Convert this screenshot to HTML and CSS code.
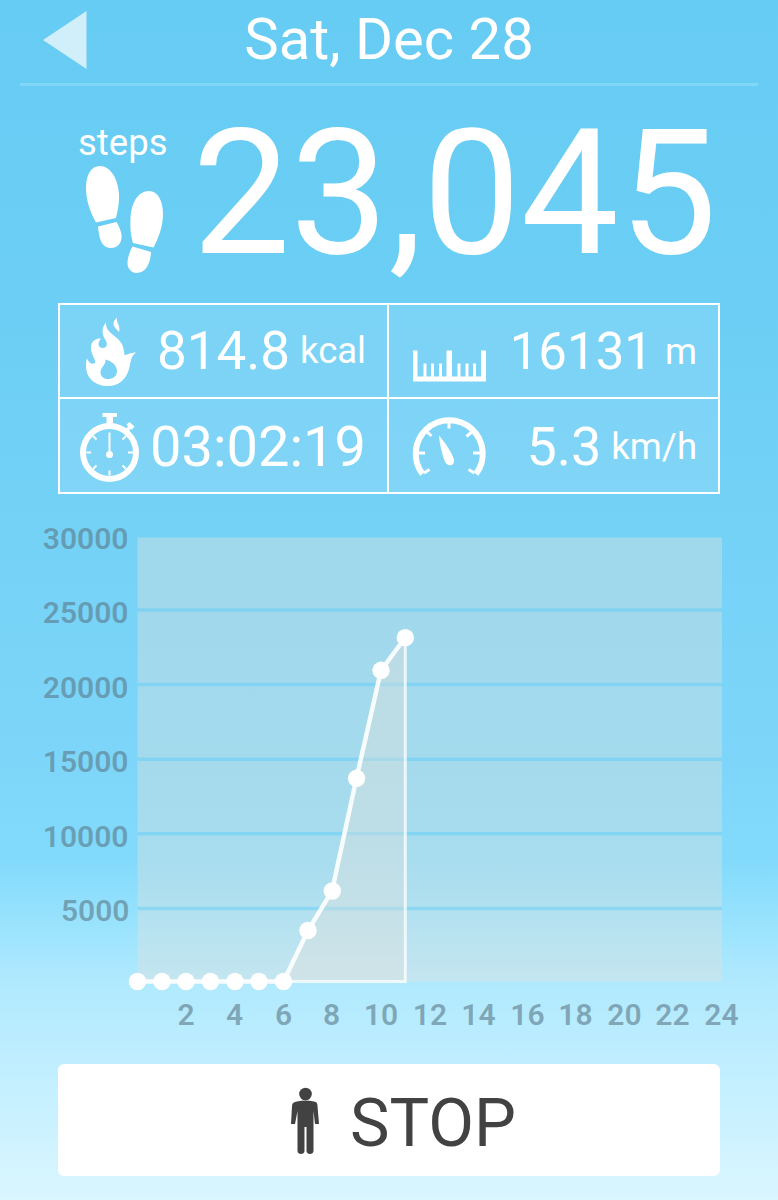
FILE: index.html
```html
<!DOCTYPE html>
<html lang="en">
<head>
    <meta charset="UTF-8">
    <meta name="viewport" content="width=device-width, initial-scale=1.0">
    <title>Pedometer</title>
    <link rel="stylesheet" href="styles.css">
</head>
<body>
    <header class="header">
        <svg class="back" viewBox="0 0 44 58"><path d="M0 29L43.500 0V58Z"/></svg>
        <h1>Sat, Dec 28</h1>
    </header>

    <section class="steps">
        <div class="steps-label">
            <span>steps</span>
            <svg width="80" height="110" viewBox="0 0 80 110">
                <path d="M15 1C25 1 33 13 34 29C34.500 40 32 48 31 53L11 57.500C6 49 1 36 1 23C1 10 6 1 15 1Z"/>
                <path d="M13 61.500L31.500 57C35 63 37 68 36.500 73C36 79 32 83 26 83C16 83 14 72 13 61.500Z"/>
                <path d="M64 26C73 26 78 36 78 49C78 62 73 74 68.500 82.500L48 78C46 71 45 65 45.500 54C46 38 53 26 64 26Z"/>
                <path d="M47.500 81.500L66 87C65.500 98 61 108 51.500 108C46 108 42 103 42.500 97C43 91 45 86 47.500 81.500Z"/>
            </svg>
        </div>
        <div class="steps-count">23,045</div>
    </section>

    <section class="stats">
        <div class="stat">
            <svg width="60" height="80" viewBox="80 311 60 80">
                <path fill-rule="evenodd" d="M106 322.500C105 333 117 335 122 344C124 348 124 352 124.500 355C127 355 131 352 136 352.500C131 356 131 361 129.500 367C127 379 119 386 108 386C95 386 86 378 86 366C86 363 86 361 87 358.500C89 363 92 365 95 363C96 359 91 355 91 348C91 341 95 338.500 101 338.500C97 343 98 348 103 348C107 348 108 344 105.500 340C101 333 102 327 106 322.500ZM105.500 359.500C106 365 100.500 367 100.500 372.500C101 382 117 381 117 371C117 365 111 361 105.500 359.500Z"/>
                <path d="M117 317.500C116 323 121 326 119 332C117 329 113 327 113.500 323C114 320 116 319 117 317.500Z"/>
            </svg>
            <p><span class="value kcal">814.8</span><span class="unit">kcal</span></p>
        </div>
        <div class="stat">
            <svg width="76" height="80" viewBox="411 310.500 76 80">
                <path d="M413 350H417.500V376H423.500V363H426.500V376H431V363H434V376H439V363H442V376H446.500V350H452V376H457.500V363H460.500V376H465.500V363H468.500V376H473V363H476V376H481V350H486V381H413Z"/>
            </svg>
            <p class="meters"><span class="value">16131</span><span class="unit">m</span></p>
        </div>
        <div class="stat">
            <svg width="62" height="80" viewBox="80 405.500 62 80">
                <circle class="ring" cx="109.500" cy="452" r="26.500"/>
                <path d="M102.500 412.500H117V416.500H113V424H106.500V416.500H102.500ZM125 429.500L128 426L126.500 424L129.500 421.500L134.500 426L132 429L130.500 428.500L128 432Z"/>
                <path class="tick" d="M109.500 432V452"/>
                <circle cx="109.500" cy="454" r="3.500"/>
                <path class="tick" d="M109.500 470V475M86.500 452H91M128 452H133M93 435.500L96.500 439M126 435.500L122.500 439M93 468.500L96.500 465M126 468.500L122.500 465"/>
            </svg>
            <p class="duration"><span class="value time">03:02:19</span></p>
        </div>
        <div class="stat">
            <svg width="76" height="80" viewBox="411 405.500 76 80">
                <path class="dial" d="M422.500 473.500A33.500 33.500 0 1 1 476 473.500"/>
                <path class="dial-tick" d="M424 472.500L429.500 469M474.500 472.500L468.500 469M418 452.500H425M473 452.500H481M426 430.500L431.500 435.500M473 430.500L466.500 436M449 420V428"/>
                <path d="M439 435C445 442 452 452 454 459C455 467 446 466 444.500 460C442 453 439.500 443 439 435Z"/>
            </svg>
            <p class="pace"><span class="value">5.3</span><span class="unit">km/h</span></p>
        </div>
    </section>

    <svg class="chart" width="778" height="530" viewBox="0 520 778 530">
        <rect class="plot" x="137.500" y="537.500" width="584.500" height="444"/>
        <path class="grid" d="M137.500 610H722M137.500 684.500H722M137.500 759.200H722M137.500 833.800H722M137.500 908.500H722"/>
        <path class="area" d="M283.500 981L308 930.500L332 891L356.500 778L381 670.500L405.300 637.500V981.500Z"/>
        <path class="edge" d="M405.300 637.500V981.500H283.500"/>
        <polyline class="line" points="137.500,981.500 283.500,981.500 308,930.500 332,891 356.500,778 381,670.500 405.300,637.500"/>
        <g class="points">
            <circle cx="137.500" cy="981.500" r="8.700"/>
            <circle cx="162" cy="981.500" r="8.700"/>
            <circle cx="186" cy="981.500" r="8.700"/>
            <circle cx="210.500" cy="981.500" r="8.700"/>
            <circle cx="235" cy="981.500" r="8.700"/>
            <circle cx="259" cy="981.500" r="8.700"/>
            <circle cx="283.500" cy="981.500" r="8.700"/>
            <circle cx="308" cy="930.500" r="8.700"/>
            <circle cx="332.300" cy="891" r="8.700"/>
            <circle cx="356.600" cy="778.300" r="8.700"/>
            <circle cx="381" cy="670.300" r="8.700"/>
            <circle cx="405.300" cy="637.700" r="8.700"/>
        </g>
        <g class="y-labels">
            <text x="128.500" y="548.500">30000</text>
            <text x="128.500" y="622.500">25000</text>
            <text x="128.500" y="697.500">20000</text>
            <text x="128.500" y="771.500">15000</text>
            <text x="128.500" y="846.500">10000</text>
            <text x="129.500" y="920.500">5000</text>
        </g>
        <g class="x-labels">
            <text x="186" y="1025">2</text>
            <text x="234.500" y="1025">4</text>
            <text x="283.500" y="1025">6</text>
            <text x="331.500" y="1025">8</text>
            <text x="381" y="1025">10</text>
            <text x="430" y="1025">12</text>
            <text x="478.500" y="1025">14</text>
            <text x="527.500" y="1025">16</text>
            <text x="575.500" y="1025">18</text>
            <text x="624.500" y="1025">20</text>
            <text x="672.500" y="1025">22</text>
            <text x="721.500" y="1025">24</text>
        </g>
    </svg>

    <button class="btn-stop">
        <svg width="30" height="70" viewBox="0 0 30 70">
            <circle cx="15.500" cy="8" r="6.300"/>
            <path d="M7 15.500Q15 13.500 24 15.500C26.500 16 27.500 17 27.500 20L29 38H25L23.500 25V65C23.500 69 16.500 69 16.500 65V41H14.500V65C14.500 69 7.500 69 7.500 65V25L5 38H1L2 20C2 17 4 16 7 15.500Z"/>
        </svg>
        <span>STOP</span>
    </button>
</body>
</html>
```
FILE: styles.css
```css
* {
    box-sizing: border-box;
}
body {
    margin: 0;
    width: 778px;
    height: 1200px;
    overflow: hidden;
    font-family: Roboto, sans-serif;
    color: #ffffff;
    background: linear-gradient(#67ccf3 0, #69cdf4 200px, #73d1f6 500px, #7dd6f9 760px, #82dafb 860px, #94e1fd 910px, #b0e9fe 980px, #bfeeff 1060px, #daf6ff 1200px);
}
svg {
    display: block;
    fill: #ffffff;
}
.header {
    display: grid;
    grid-template-columns: 66px 1fr 66px;
    align-items: center;
    height: 86px;
    margin: 0 20px;
    padding-bottom: 4px;
    border-bottom: 3px solid #82d7f8;
}
.back {
    width: 44px;
    height: 58px;
    margin-left: 23px;
    fill: #d1effb;
}
h1 {
    margin: 0;
    font-size: 58px;
    font-weight: 400;
    line-height: 77px;
    text-align: center;
}
.steps {
    display: flex;
    justify-content: space-between;
    height: 217px;
    padding: 0 61px 0 78px;
}
.steps-label {
    padding-top: 35px;
    font-size: 36.5px;
    line-height: 43px;
}
.steps-label svg {
    margin: 1px 0 0 7px;
}
.steps-count {
    font-size: 174.5px;
    line-height: 216px;
}
.stats {
    display: grid;
    grid-template-columns: 327px 329px;
    grid-template-rows: 92px 93px;
    gap: 2px;
    width: 662px;
    height: 191px;
    margin: 0 auto;
    border: 2px solid #ffffff;
    background: linear-gradient(#ffffff, #ffffff) 327px 0 / 2px 100% no-repeat,
        linear-gradient(#ffffff, #ffffff) 0 92px / 100% 2px no-repeat,
        rgba(255, 255, 255, 0.1);
}
.stat {
    display: flex;
    justify-content: space-between;
    align-items: center;
    padding: 0 21px 0 20px;
}
.stat:nth-child(even) {
    padding-left: 22px;
}
.stat p {
    margin: 0;
    white-space: nowrap;
}
.value {
    font-size: 54px;
}
.kcal {
    font-size: 53px;
}
.time {
    font-size: 56px;
}
.meters .value {
    font-size: 51px;
}
.stat .duration, .stat .pace {
    padding-top: 2px;
}
.unit {
    margin-left: 10px;
    font-size: 36.5px;
    line-height: 1;
    vertical-align: 6px;
}
.meters .unit {
    margin-left: 12px;
    vertical-align: 5px;
}
.ring, .dial {
    fill: none;
    stroke: #ffffff;
    stroke-width: 6;
}
.tick, .dial-tick {
    fill: none;
    stroke: #ffffff;
    stroke-width: 2;
}
.dial-tick {
    stroke-width: 3;
}
.chart {
    margin-top: 26px;
}
.plot, .area {
    fill: rgba(226, 225, 221, 0.4);
}
.grid {
    stroke: rgba(90, 205, 248, 0.45);
    stroke-width: 3.5;
}
.edge, .line {
    fill: none;
    stroke: rgba(255, 255, 255, 0.75);
    stroke-width: 3;
}
.line {
    stroke: rgba(255, 255, 255, 0.9);
    stroke-width: 4.5;
}
.y-labels, .x-labels {
    fill: rgba(90, 120, 135, 0.6);
    font-size: 30px;
    font-weight: 600;
}
.y-labels {
    text-anchor: end;
}
.x-labels {
    text-anchor: middle;
}
.btn-stop {
    display: flex;
    justify-content: center;
    align-items: center;
    gap: 30px;
    width: 662px;
    height: 112px;
    margin: 14px auto 0;
    padding: 5px 0 0 28px;
    border: none;
    border-radius: 6px;
    background: #ffffff;
    color: #424242;
    font-family: inherit;
    font-size: 66.5px;
}
.btn-stop svg {
    margin-bottom: 4px;
    fill: #424242;
}
```
